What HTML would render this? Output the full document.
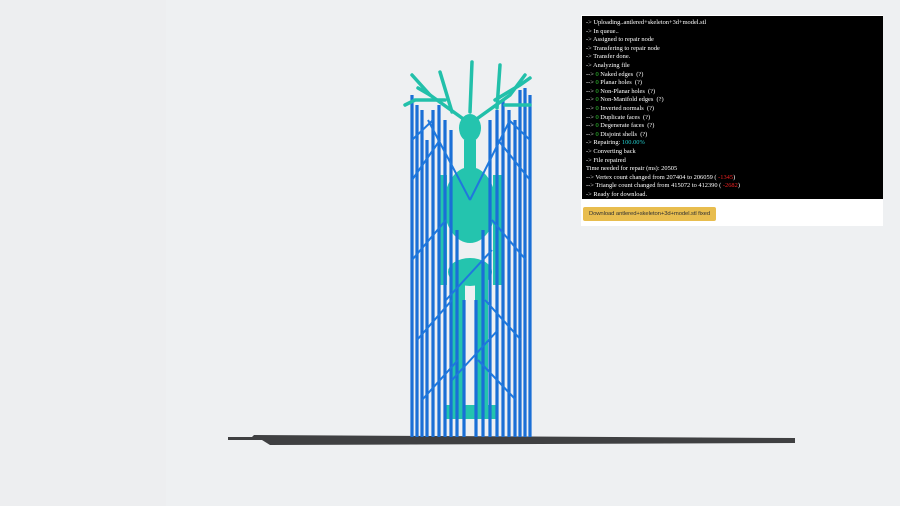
<!DOCTYPE html>
<html><head><meta charset="utf-8"><style>
html,body{margin:0;padding:0;width:900px;height:506px;overflow:hidden;background:#eef0f2;font-family:"Liberation Serif",serif}
#left{position:absolute;left:0;top:0;width:166px;height:506px;background:#edeef0}
#panel{position:absolute;left:581px;top:15px;width:302px;height:211px;background:#fff}
#log{position:absolute;left:1px;top:1px;width:301px;height:183px;background:#000;color:#fff;font-size:6.4px;line-height:8.6px;padding-top:3px;box-sizing:border-box;padding-left:4px;white-space:nowrap}
.g{color:#3c3}.c{color:#2cc}.r{color:#e22}
#btn{position:absolute;left:2px;top:192px;width:133px;height:14px;background:#e8bd4e;border-radius:2px;font-family:"Liberation Sans",sans-serif;font-size:5.9px;line-height:14px;text-align:center;color:#333;white-space:nowrap;letter-spacing:-0.1px}
svg{position:absolute;left:0;top:0}
</style></head><body>
<div id="left"></div>
<svg width="900" height="506" viewBox="0 0 900 506">
<polygon points="228,437 252,437 254,435 795,438 795,443 270,445 262,440 228,440" fill="#3f4042"/>
<g fill="#24c4ae">
<ellipse cx="470" cy="205" rx="26" ry="38"/>
<ellipse cx="470" cy="128" rx="11" ry="14"/>
<rect x="464" y="140" width="12" height="30"/>
<ellipse cx="470" cy="272" rx="22" ry="14"/>
<rect x="452" y="280" width="13" height="130"/><rect x="475" y="280" width="13" height="130"/>
<rect x="438" y="175" width="9" height="110"/><rect x="493" y="175" width="9" height="110"/>
<rect x="446" y="405" width="52" height="14"/>
</g>
<g stroke="#1a6fd6" stroke-width="3.2">
<line x1="412" y1="95" x2="412" y2="437"/><line x1="417" y1="105" x2="417" y2="437"/><line x1="422" y1="110" x2="422" y2="437"/>
<line x1="427" y1="140" x2="427" y2="437"/><line x1="433" y1="110" x2="433" y2="437"/><line x1="439" y1="105" x2="439" y2="437"/>
<line x1="445" y1="120" x2="445" y2="437"/><line x1="451" y1="130" x2="451" y2="437"/><line x1="457" y1="230" x2="457" y2="437"/>
<line x1="464" y1="300" x2="464" y2="437"/><line x1="476" y1="300" x2="476" y2="437"/>
<line x1="483" y1="230" x2="483" y2="437"/><line x1="490" y1="120" x2="490" y2="437"/><line x1="497" y1="110" x2="497" y2="437"/>
<line x1="503" y1="100" x2="503" y2="437"/><line x1="509" y1="110" x2="509" y2="437"/><line x1="515" y1="120" x2="515" y2="437"/>
<line x1="520" y1="90" x2="520" y2="437"/><line x1="525" y1="88" x2="525" y2="437"/><line x1="530" y1="95" x2="530" y2="437"/>
</g>
<g stroke="#1f78dd" stroke-width="2">
<line x1="412" y1="180" x2="440" y2="140"/><line x1="412" y1="260" x2="446" y2="220"/><line x1="417" y1="340" x2="452" y2="300"/>
<line x1="422" y1="400" x2="458" y2="360"/><line x1="530" y1="180" x2="498" y2="140"/><line x1="526" y1="260" x2="492" y2="220"/>
<line x1="521" y1="340" x2="485" y2="300"/><line x1="516" y1="400" x2="478" y2="360"/><line x1="446" y1="300" x2="492" y2="250"/>
<line x1="452" y1="380" x2="498" y2="330"/><line x1="428" y1="120" x2="470" y2="200"/><line x1="510" y1="120" x2="470" y2="200"/>
<line x1="412" y1="140" x2="433" y2="120"/><line x1="530" y1="140" x2="509" y2="120"/>
</g>
<g stroke="#22c0aa" stroke-width="3.5" fill="none" stroke-linecap="round">
<path d="M462,118 L430,95 L412,75"/><path d="M430,95 L418,88"/><path d="M452,112 L440,72"/><path d="M445,100 L415,100 L405,105"/>
<path d="M478,118 L510,95 L525,75"/><path d="M497,108 L500,65"/><path d="M495,100 L520,85 L530,78"/><path d="M505,105 L530,105"/><path d="M470,112 L472,62"/>
</g>
</svg>
<div id="panel">
<div id="log">
-&gt; Uploading..antlered+skeleton+3d+model.stl<br>
-&gt; In queue..<br>
-&gt; Assigned to repair node<br>
-&gt; Transfering to repair node<br>
-&gt; Transfer done.<br>
-&gt; Analyzing file<br>
--&gt; <span class="g">0</span> Naked edges &nbsp;(?)<br>
--&gt; <span class="g">0</span> Planar holes &nbsp;(?)<br>
--&gt; <span class="g">0</span> Non-Planar holes &nbsp;(?)<br>
--&gt; <span class="g">0</span> Non-Manifold edges &nbsp;(?)<br>
--&gt; <span class="g">0</span> Inverted normals &nbsp;(?)<br>
--&gt; <span class="g">0</span> Duplicate faces &nbsp;(?)<br>
--&gt; <span class="g">0</span> Degenerate faces &nbsp;(?)<br>
--&gt; <span class="g">0</span> Disjoint shells &nbsp;(?)<br>
-&gt; Repairing: <span class="c">100.00%</span><br>
-&gt; Converting back<br>
-&gt; File repaired<br>
Time needed for repair (ms): 20505<br>
--&gt; Vertex count changed from 207404 to 206059 ( <span class="r">-1345</span>)<br>
--&gt; Triangle count changed from 415072 to 412390 ( <span class="r">-2682</span>)<br>
-&gt; Ready for download.
</div>
<div id="btn">Download antlered+skeleton+3d+model.stl fixed</div>
</div>
</body></html>
